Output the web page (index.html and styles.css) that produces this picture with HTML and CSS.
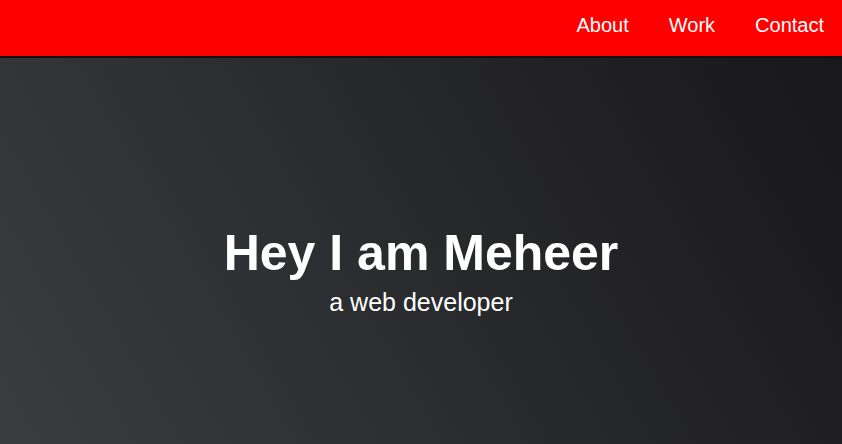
FILE: index.html
```html
<!DOCTYPE html>
<html>
<head>
<meta charset="utf-8">
<link rel="stylesheet" href="styles.css">
</head>
<body>
<header class="topbar">
  <nav class="nav">
    <a class="nav-link" href="#about">About</a>
    <a class="nav-link" href="#work">Work</a>
    <a class="nav-link" href="#contact">Contact</a>
  </nav>
</header>
<main class="hero">
  <h1 class="hero-title">Hey I am Meheer</h1>
  <p class="hero-sub">a web developer</p>
</main>
</body>
</html>
```
FILE: styles.css
```css
html, body {
  margin: 0;
  padding: 0;
  height: 100%;
}
body {
  font-family: "Liberation Sans", Arial, sans-serif;
  background: #1c1c1e;
  display: flex;
  flex-direction: column;
  overflow: hidden;
}
.topbar {
  box-sizing: border-box;
  height: 58px;
  padding-bottom: 6px;
  background: #ff0000;
  border-bottom: 2px solid #111;
  display: flex;
  justify-content: flex-end;
  align-items: center;
  flex-shrink: 0;
}
.nav {
  display: flex;
  gap: 40px;
  padding-right: 18px;
}
.nav-link {
  color: #fff;
  text-decoration: none;
  font-size: 20px;
}
.hero {
  flex: 1;
  background: linear-gradient(60deg, #3a3d40, #181719);
  display: flex;
  flex-direction: column;
  align-items: center;
  justify-content: center;
  color: #fff;
  padding-top: 41px;
}
.hero-title {
  margin: 0 0 6px;
  font-size: 50px;
  font-weight: bold;
  line-height: 55px;
}
.hero-sub {
  margin: 0;
  font-size: 25px;
  line-height: 30px;
}
```
